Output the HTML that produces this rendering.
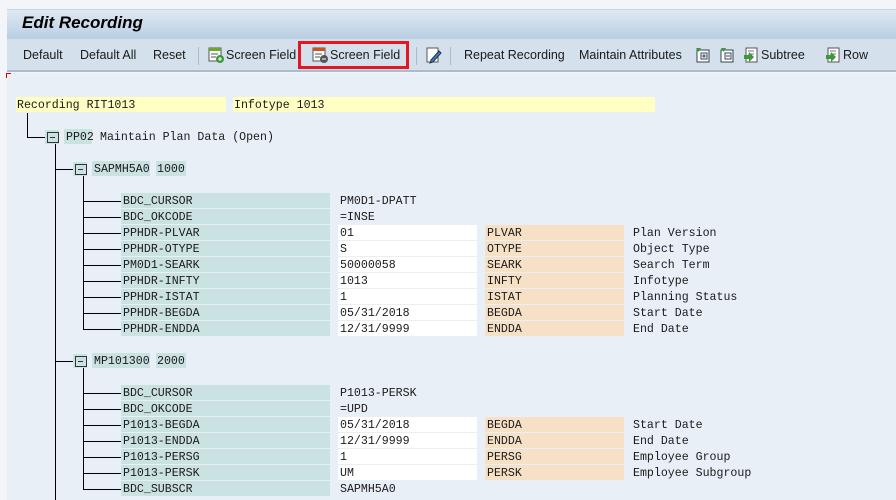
<!DOCTYPE html><html><head><style>
*{margin:0;padding:0;box-sizing:border-box}
body{width:896px;height:500px;overflow:hidden;background:#f3f5f8;position:relative;font-family:"Liberation Sans",sans-serif}
.a{position:absolute}
#title{left:7px;top:9px;width:889px;height:30px;background:linear-gradient(#dfe9f3,#b9cee2);border-top:1px solid #c8d6e4}
#title span{position:absolute;left:15px;top:3px;font-size:17px;font-weight:bold;font-style:italic;color:#000}
#tb{left:7px;top:39px;width:889px;height:33px;background:#d4e0ec;border-bottom:2px solid #a9bdd1}
.t{position:absolute;top:9px;font-size:12.5px;color:#1a1a1a;white-space:nowrap}
.sep{position:absolute;top:8px;width:1px;height:18px;background:#a9bcd0}
#content{left:7px;top:73px;width:889px;height:427px;background:#e9eff6}
.m{font-family:"Liberation Mono",monospace;font-size:11.6px;color:#1a1a1a;white-space:pre;position:absolute;height:15px;line-height:14px;padding-top:2px}
.lb{background:#cbe2e3;width:209px;padding-left:2px}
.vl{width:139px;padding-left:2px}
.w{background:#fff}
.tf{background:#f6e1c6;width:139px;padding-left:2px}
.v{position:absolute;width:1px;background:#000}
.h{position:absolute;height:1px;background:#000}
.fold{position:absolute;width:14px;height:14px;background:#cbe2e3}
.fold:before{content:"";position:absolute;left:2px;top:2px;width:10px;height:9px;border:1px solid #333}
.fold:after{content:"";position:absolute;left:5px;top:7px;width:5px;height:1px;background:#333}
</style></head><body>
<div id="title" class="a"><span>Edit Recording</span></div>
<div id="tb" class="a">
<span class="t" style="left:16px">Default</span>
<span class="t" style="left:73px">Default All</span>
<span class="t" style="left:146px">Reset</span>
<div class="sep" style="left:191px"></div>
<svg class="a" style="left:201px;top:8px" width="17" height="17"><rect x="1" y="1" width="12" height="13" fill="#fff" stroke="#555"/><rect x="1" y="1" width="12" height="3" fill="#6aaa2a"/><line x1="3" y1="7" x2="10" y2="7" stroke="#555"/><line x1="3" y1="10" x2="8" y2="10" stroke="#555"/><circle cx="12" cy="12" r="4" fill="#3c9a3c"/><path d="M10 12h4M12 10v4" stroke="#fff"/></svg>
<span class="t" style="left:219px">Screen Field</span>
<div class="a" style="left:291px;top:2px;width:111px;height:28px;border:3px solid #e8141e"></div>
<svg class="a" style="left:305px;top:8px" width="17" height="17"><rect x="1" y="1" width="12" height="13" fill="#fff" stroke="#555"/><rect x="1" y="1" width="12" height="3" fill="#d2521e"/><line x1="3" y1="7" x2="10" y2="7" stroke="#555"/><line x1="3" y1="10" x2="8" y2="10" stroke="#555"/><circle cx="12" cy="12" r="4" fill="#555"/><path d="M10 12h4" stroke="#fff"/></svg>
<span class="t" style="left:323px">Screen Field</span>
<div class="sep" style="left:409px"></div>
<svg class="a" style="left:419px;top:8px" width="16" height="17"><rect x="1" y="1" width="11" height="14" fill="#fff" stroke="#555"/><path d="M5 13l8-9 2 2-8 9-3 1z" fill="#3a7cc4" stroke="#234"/></svg>
<div class="sep" style="left:443px"></div>
<span class="t" style="left:457px">Repeat Recording</span>
<span class="t" style="left:572px">Maintain Attributes</span>
<svg class="a" style="left:688px;top:8px" width="16" height="17"><rect x="2" y="3" width="12" height="12" fill="#fff" stroke="#345"/><path d="M1 1l5 0-2.5 4z" fill="#3a9a3a"/><rect x="6" y="6" width="6" height="6" fill="none" stroke="#345"/><path d="M7 9h4M9 7v4" stroke="#345"/></svg>
<svg class="a" style="left:712px;top:8px" width="16" height="17"><rect x="2" y="3" width="12" height="12" fill="#fff" stroke="#345"/><path d="M2 1l5 0-2.5 4z" fill="#3a9a3a"/><rect x="6" y="6" width="6" height="6" fill="none" stroke="#345"/><path d="M7 9h4" stroke="#345"/></svg>
<svg class="a" style="left:736px;top:8px" width="16" height="17"><rect x="3" y="1" width="11" height="14" fill="#fff" stroke="#555"/><path d="M5 4h6M5 7h6" stroke="#777"/><path d="M1 8h5v-3l5 5-5 5v-3h-5z" fill="#3a9a3a"/></svg>
<span class="t" style="left:754px">Subtree</span>
<svg class="a" style="left:818px;top:8px" width="16" height="17"><rect x="3" y="1" width="11" height="14" fill="#fff" stroke="#555"/><path d="M5 4h6M5 7h6" stroke="#777"/><path d="M1 8h5v-3l5 5-5 5v-3h-5z" fill="#3a9a3a"/></svg>
<span class="t" style="left:836px">Row</span>
</div>
<div id="content" class="a"></div>
<div class="a" style="left:6px;top:73px;width:5px;height:1px;background:#d00"></div>
<div class="a" style="left:6px;top:73px;width:1px;height:5px;background:#d00"></div>
<div class="m" style="left:16px;top:97px;width:210px;background:#ffffc4;padding-left:1px">Recording RIT1013</div>
<div class="m" style="left:233px;top:97px;width:422px;background:#ffffc4;padding-left:1px">Infotype 1013</div>
<div class="v" style="left:27px;top:113px;height:25px"></div><div class="h" style="left:27px;top:137px;width:18px"></div>
<div class="fold" style="left:45px;top:130px"></div>
<div class="m" style="left:64px;top:129px;background:#cbe2e3;width:28px;padding-left:2px">PP02</div>
<div class="m" style="left:100px;top:129px">Maintain Plan Data (Open)</div>
<div class="v" style="left:55px;top:144px;height:356px"></div>
<div class="h" style="left:55px;top:169px;width:18px"></div><div class="fold" style="left:73px;top:162px"></div>
<div class="m" style="left:92px;top:161px;background:#cbe2e3;width:58px;padding-left:2px">SAPMH5A0</div>
<div class="m" style="left:156px;top:161px;background:#cbe2e3;width:30px;padding-left:1px">1000</div>
<div class="v" style="left:83px;top:176px;height:153px"></div>
<div class="h" style="left:55px;top:361px;width:18px"></div><div class="fold" style="left:73px;top:354px"></div>
<div class="m" style="left:92px;top:353px;background:#cbe2e3;width:58px;padding-left:2px">MP101300</div>
<div class="m" style="left:156px;top:353px;background:#cbe2e3;width:30px;padding-left:1px">2000</div>
<div class="v" style="left:83px;top:368px;height:121px"></div>
<div id="rows"></div>
<script>
var r1=[["BDC_CURSOR","PM0D1-DPATT"],["BDC_OKCODE","=INSE"],["PPHDR-PLVAR","01","PLVAR","Plan Version"],["PPHDR-OTYPE","S","OTYPE","Object Type"],["PM0D1-SEARK","50000058","SEARK","Search Term"],["PPHDR-INFTY","1013","INFTY","Infotype"],["PPHDR-ISTAT","1","ISTAT","Planning Status"],["PPHDR-BEGDA","05/31/2018","BEGDA","Start Date"],["PPHDR-ENDDA","12/31/9999","ENDDA","End Date"]];
var r2=[["BDC_CURSOR","P1013-PERSK"],["BDC_OKCODE","=UPD"],["P1013-BEGDA","05/31/2018","BEGDA","Start Date"],["P1013-ENDDA","12/31/9999","ENDDA","End Date"],["P1013-PERSG","1","PERSG","Employee Group"],["P1013-PERSK","UM","PERSK","Employee Subgroup"],["BDC_SUBSCR","SAPMH5A0"]];
var h="";
function add(rows,y0){rows.forEach(function(r,i){var y=y0+i*16;
h+='<div class="h" style="left:83px;top:'+(y+8)+'px;width:38px"></div>';
h+='<div class="m lb" style="left:121px;top:'+y+'px">'+r[0]+'</div>';
h+='<div class="m vl'+(r[2]?' w':'')+'" style="left:338px;top:'+y+'px">'+r[1]+'</div>';
if(r[2]){h+='<div class="m tf" style="left:485px;top:'+y+'px">'+r[2]+'</div><div class="m" style="left:633px;top:'+y+'px">'+r[3]+'</div>';}
});}
add(r1,193);add(r2,385);
document.getElementById("rows").outerHTML=h;
</script>
</body></html>
